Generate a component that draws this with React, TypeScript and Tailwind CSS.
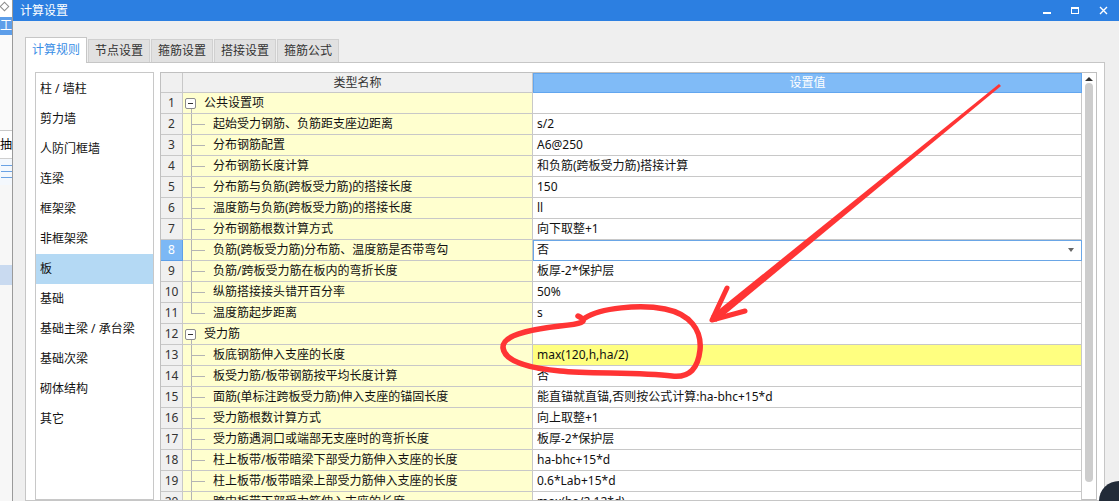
import React from 'react';

type Row = { n: number; name: string; value: string; group?: boolean; last?: boolean };

const rows: Row[] = [
  { n: 1, name: '公共设置项', value: '', group: true },
  { n: 2, name: '起始受力钢筋、负筋距支座边距离', value: 's/2' },
  { n: 3, name: '分布钢筋配置', value: 'A6@250' },
  { n: 4, name: '分布钢筋长度计算', value: '和负筋(跨板受力筋)搭接计算' },
  { n: 5, name: '分布筋与负筋(跨板受力筋)的搭接长度', value: '150' },
  { n: 6, name: '温度筋与负筋(跨板受力筋)的搭接长度', value: 'll' },
  { n: 7, name: '分布钢筋根数计算方式', value: '向下取整+1' },
  { n: 8, name: '负筋(跨板受力筋)分布筋、温度筋是否带弯勾', value: '否' },
  { n: 9, name: '负筋/跨板受力筋在板内的弯折长度', value: '板厚-2*保护层' },
  { n: 10, name: '纵筋搭接接头错开百分率', value: '50%' },
  { n: 11, name: '温度筋起步距离', value: 's', last: true },
  { n: 12, name: '受力筋', value: '', group: true },
  { n: 13, name: '板底钢筋伸入支座的长度', value: 'max(120,h,ha/2)' },
  { n: 14, name: '板受力筋/板带钢筋按平均长度计算', value: '否' },
  { n: 15, name: '面筋(单标注跨板受力筋)伸入支座的锚固长度', value: '能直锚就直锚,否则按公式计算:ha-bhc+15*d' },
  { n: 16, name: '受力筋根数计算方式', value: '向上取整+1' },
  { n: 17, name: '受力筋遇洞口或端部无支座时的弯折长度', value: '板厚-2*保护层' },
  { n: 18, name: '柱上板带/板带暗梁下部受力筋伸入支座的长度', value: 'ha-bhc+15*d' },
  { n: 19, name: '柱上板带/板带暗梁上部受力筋伸入支座的长度', value: '0.6*Lab+15*d' },
  { n: 20, name: '跨中板带下部受力筋伸入支座的长度', value: 'max(ha/2,12*d)' },
];

const categories = ['柱 / 墙柱', '剪力墙', '人防门框墙', '连梁', '框架梁', '非框架梁', '板', '基础', '基础主梁 / 承台梁', '基础次梁', '砌体结构', '其它'];

const tabs = ['计算规则', '节点设置', '箍筋设置', '搭接设置', '箍筋公式'];

function BackStrip() {
  return (
    <div className="w-[12px] shrink-0 flex flex-col bg-white overflow-hidden">
      <div className="h-[17px] relative">
        <div className="absolute left-[1px] top-[3px] w-[7px] h-[7px] rotate-45 border border-[#8c8c8c] bg-white" />
      </div>
      <div className="h-[18px] bg-[#5d9ee9] text-white text-[12px] leading-[18px] whitespace-nowrap">工程</div>
      <div className="h-[96px] bg-[#fafafa] border-b border-[#c8c8c8]" />
      <div className="h-[28px] text-[12px] leading-[28px] whitespace-nowrap border-b border-[#cfcfcf]">抽帐</div>
      <div className="h-[26px] flex flex-col justify-center gap-[3px] pl-[1px] bg-[#f4f8fd]">
        <div className="h-[3px] w-[11px] border-t border-[#6aa2e4]" />
        <div className="h-[3px] w-[11px] border-t border-[#6aa2e4]" />
        <div className="h-[3px] w-[11px] border-t border-[#6aa2e4]" />
      </div>
      <div className="h-[80px] bg-[#f7f7f7]" />
      <div className="h-[20px] bg-[#c9daf0]" />
      <div className="flex-1 bg-[#f7f7f7]" />
    </div>
  );
}

function TitleBar() {
  return (
    <div className="h-[21px] shrink-0 bg-[#2c7fe1] flex items-center text-white">
      <span className="pl-[7px] text-[12px] leading-[21px]">计算设置</span>
      <div className="ml-auto flex items-center gap-[20px] pr-[11px]">
        <div className="w-[8px] h-[2px] bg-white mt-[5px]" />
        <div className="w-[8px] h-[7px] border border-white border-t-2" />
        <svg width="9" height="9" viewBox="0 0 9 9">
          <path d="M1 1 L8 8 M8 1 L1 8" stroke="white" strokeWidth="1.4" />
        </svg>
      </div>
    </div>
  );
}

function Tabs() {
  return (
    <div className="flex items-end h-[26px] shrink-0">
      {tabs.map((t, i) =>
        i === 0 ? (
          <div
            key={t}
            className="relative z-10 -mb-px h-[26px] px-[6px] bg-white border border-b-0 border-[#c6c6c6] text-[#3a8ee6] text-[12px] leading-[24px]"
          >
            {t}
          </div>
        ) : (
          <div
            key={t}
            className="h-[23px] px-[6px] ml-px bg-[#e1e1e1] border border-b-0 border-[#d0d0d0] text-[#333] text-[12px] leading-[22px]"
          >
            {t}
          </div>
        )
      )}
    </div>
  );
}

function SideList() {
  return (
    <div className="w-[119px] shrink-0 border border-[#c8c8c8] bg-white pt-px">
      {categories.map(c => (
        <div
          key={c}
          className={`h-[30px] flex items-center pl-[4px] text-[12px] text-[#111] whitespace-nowrap ${c === '板' ? 'bg-[#b4d9f4]' : ''}`}
        >
          {c}
        </div>
      ))}
    </div>
  );
}

function NameCell({ row }: { row: Row }) {
  return (
    <div className="relative w-[350px] shrink-0 h-full bg-[#ffffcf] border-r border-b border-[#c8c8c8] whitespace-nowrap overflow-hidden">
      {row.group ? (
        <>
          <div className="absolute left-[2px] top-[5px] w-[11px] h-[11px] border border-[#8c8c8c] rounded-[2px] bg-white flex items-center justify-center">
            <div className="w-[5px] h-px bg-[#333]" />
          </div>
          <div className="absolute left-[8px] top-[16px] -bottom-px w-px bg-[#b4b4b4]" />
          <span className="pl-[21px] leading-[20px] text-[#111]">{row.name}</span>
        </>
      ) : (
        <>
          <div className={`absolute left-[8px] -top-px w-px bg-[#b4b4b4] ${row.last ? 'h-[11px]' : '-bottom-px'}`} />
          <div className="absolute left-[8px] top-[10px] w-[14px] h-px bg-[#b4b4b4]" />
          <span className="pl-[30px] leading-[20px] text-[#111]">{row.name}</span>
        </>
      )}
    </div>
  );
}

function Grid() {
  return (
    <div className="w-[937px] shrink-0 border border-[#c0c0c0] flex bg-white">
      <div className="flex flex-col w-[921px] shrink-0">
        {/* header */}
        <div className="h-[20px] flex shrink-0">
          <div className="w-[22px] shrink-0 bg-[#f0f0f0] border-r border-b border-[#c8c8c8]" />
          <div className="w-[350px] shrink-0 bg-[#f0f0f0] border-r border-b border-[#c8c8c8] text-center text-[#333] leading-[19px]">
            类型名称
          </div>
          <div className="w-[549px] shrink-0 bg-[#80bbf7] border border-[#62a6ef] text-center text-white leading-[18px]">
            设置值
          </div>
        </div>
        {rows.map(row => (
          <div key={row.n} className="h-[21px] flex shrink-0">
            <div
              className={`w-[22px] shrink-0 border-r border-b text-center leading-[20px] ${
                row.n === 8 ? 'bg-[#7cb8f5] border-[#5d9fe8] text-white' : 'bg-[#f0f0f0] border-[#c8c8c8] text-[#333]'
              }`}
            >
              {row.n}
            </div>
            <NameCell row={row} />
            <div
              className={`relative w-[549px] shrink-0 border-r border-b border-[#c8c8c8] pl-[4px] leading-[20px] text-[#111] whitespace-nowrap ${
                row.n === 13 ? 'bg-[#ffff80]' : 'bg-white'
              } ${row.n === 8 ? 'outline outline-1 -outline-offset-1 outline-[#6aa6e6]' : ''}`}
            >
              {row.value}
              {row.n === 8 && (
                <span className="absolute right-[7px] top-[8px] w-0 h-0 border-l-[3px] border-r-[3px] border-t-[4px] border-l-transparent border-r-transparent border-t-[#666]" />
              )}
            </div>
          </div>
        ))}
      </div>
      {/* scrollbar */}
      <div className="w-[14px] shrink-0 flex flex-col items-center bg-white">
        <div className="mt-[4px] w-0 h-0 border-l-[4px] border-r-[4px] border-b-[4px] border-l-transparent border-r-transparent border-b-[#333]" />
        <div className="mt-[2px] w-[8px] h-[399px] rounded-full bg-[#cdcdcd]" />
      </div>
    </div>
  );
}

function Annotation() {
  return (
    <svg className="absolute left-0 top-0 pointer-events-none" width="1119" height="501" viewBox="0 0 1119 501">
      <g fill="none" stroke="#ff3434" strokeLinecap="round" strokeLinejoin="round">
        <path
          d="M585 318 C600 308, 640 304, 665 309 C690 314, 702 330, 700 350 C698 368, 690 378, 672 376 C640 372, 590 374, 560 371 C530 368, 505 362, 503 348 C502 336, 525 330, 560 326 C580 324, 590 322, 578 316"
          strokeWidth="5.5"
        />
        <path d="M727 288 L712 320 L745 311" strokeWidth="5" />
      </g>
      {/* tapered shaft, thin at the top */}
      <polygon points="999,84 1001,86 716,322 711,316" fill="#ff3434" />
    </svg>
  );
}

export default function App() {
  return (
    <div className="relative w-[1119px] h-[501px] overflow-hidden bg-[#efefef] flex text-[12px] [font-family:'Noto_Sans','Noto_Sans_CJK_SC',sans-serif]">
      <BackStrip />
      <div className="flex-1 flex flex-col border-l border-[#9a9a9a] min-w-0">
        <TitleBar />
        <div className="flex-1 flex flex-col pl-[12px] pr-[14px] pt-[15px] min-h-0">
          <Tabs />
          <div className="flex-1 bg-white border border-[#c6c6c6] flex pl-[9px] pt-[9px] gap-[6px] min-h-0 overflow-hidden">
            <SideList />
            <Grid />
          </div>
        </div>
      </div>
      <div className="absolute left-[1099px] top-[481px] w-[40px] h-[40px] rounded-full bg-[#222b38]" />
      <Annotation />
    </div>
  );
}
